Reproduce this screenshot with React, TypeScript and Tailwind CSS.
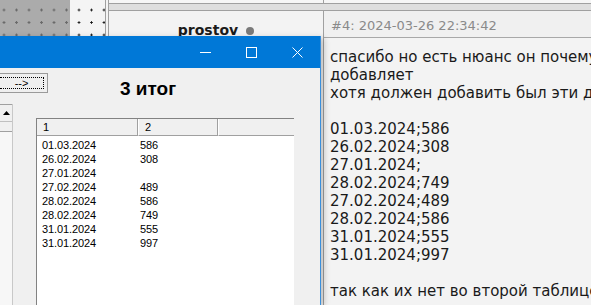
const rows: [string, string][] = [
  ["01.03.2024", "586"],
  ["26.02.2024", "308"],
  ["27.01.2024", ""],
  ["27.02.2024", "489"],
  ["28.02.2024", "586"],
  ["28.02.2024", "749"],
  ["31.01.2024", "555"],
  ["31.01.2024", "997"],
];

const message = [
  "спасибо но есть нюанс он почему то не",
  "добавляет",
  "хотя должен добавить был эти данные",
  "",
  "01.03.2024;586",
  "26.02.2024;308",
  "27.01.2024;",
  "28.02.2024;749",
  "27.02.2024;489",
  "28.02.2024;586",
  "31.01.2024;555",
  "31.01.2024;997",
  "",
  "так как их нет во второй таблице",
];

function TitleButtons() {
  return (
    <div className="flex h-full justify-end">
      <div className="flex w-[46px] items-center justify-center">
        <svg width="11" height="11" viewBox="0 0 11 11">
          <path d="M0 5.5H11" stroke="#fff" strokeWidth="1" />
        </svg>
      </div>
      <div className="flex w-[46px] items-center justify-center">
        <svg width="11" height="11" viewBox="0 0 11 11">
          <rect x="0.5" y="0.5" width="10" height="10" fill="none" stroke="#fff" strokeWidth="1" />
        </svg>
      </div>
      <div className="flex w-[46px] items-center justify-center">
        <svg width="11" height="11" viewBox="0 0 11 11">
          <path d="M0.5 0.5L10.5 10.5M10.5 0.5L0.5 10.5" stroke="#fff" strokeWidth="1" />
        </svg>
      </div>
    </div>
  );
}

function ListView() {
  return (
    <div className="ml-[23px] mt-[14px] h-[187px] w-[258px] border-l border-t border-[#828282] bg-white font-['Liberation_Sans',sans-serif] text-[11px] tracking-[-0.1px] text-black">
      <div className="flex h-[17px] bg-[#f0f0f0]">
        <div className="w-[101px] border-b border-r border-[#a0a0a0] pl-[6px] leading-[16px]">1</div>
        <div className="w-[80px] border-b border-r border-l border-[#a0a0a0] border-l-white pl-[6px] leading-[16px]">2</div>
        <div className="flex-1 border-b border-l border-[#a0a0a0] border-l-white" />
      </div>
      <div className="pt-[2px]">
        {rows.map(([d, v], i) => (
          <div key={i} className="flex h-[14px] leading-[14px]">
            <div className="w-[101px] pl-[5px]">{d}</div>
            <div className="pl-[2px]">{v}</div>
          </div>
        ))}
      </div>
    </div>
  );
}

function DialogWindow() {
  return (
    <div className="absolute left-0 top-[36px] h-[269px] w-[321px] border-r border-[#3a8fdb] bg-[#f0f0f0] shadow-[3px_2px_6px_rgba(0,0,0,0.22)]">
      <div className="h-[32px] bg-[#0078d7]">
        <TitleButtons />
      </div>
      <div className="flex h-[36px] items-start">
        <div className="mt-[5px] flex h-[20px] w-[48px] items-center justify-center border-b border-r border-t border-[#9a9a9a] bg-[#efefef] p-[3px] pl-0">
          <div className="flex h-full w-full items-center justify-center border border-dotted border-l-0 border-black font-['Liberation_Sans',sans-serif] text-[11px] leading-none text-black">
            --&gt;
          </div>
        </div>
        <div className="ml-[72px] mt-[10px] font-['Liberation_Sans',sans-serif] text-[19px] font-bold leading-[22px] text-black">
          3 итог
        </div>
      </div>
      <div className="flex items-start">
        <div className="flex h-[201px] w-[13px] flex-col border-r border-[#c8c8c8]">
          <div className="h-[28px] border-b border-t border-[#a0a0a0] bg-[#f0f0f0]">
            <div className="flex h-[17px] items-center justify-center border-b border-[#c0c0c0]">
              <svg width="7" height="4" viewBox="0 0 7 4">
                <path d="M0 4L3.5 0L7 4Z" fill="#000" />
              </svg>
            </div>
          </div>
          <div className="flex-1 bg-[#f7f7f7]" />
        </div>
        <ListView />
      </div>
    </div>
  );
}

export default function App() {
  return (
    <div className="relative h-[305px] w-[591px] overflow-hidden bg-[#f3f3f3] font-['DejaVu_Sans',sans-serif]">
      <div className="flex h-full">
        <div className="flex h-[36px] w-[108px]">
          <div className="h-full w-[70px] bg-[#ababab] bg-[radial-gradient(circle,#6a6a6a_1px,transparent_1.4px)] bg-[length:12.5px_12.5px] bg-[position:-2.25px_3.75px]" />
          <div className="h-full w-[35px] bg-[#f4f4f4] bg-[radial-gradient(circle,#111_0.9px,transparent_1.3px)] bg-[length:12.5px_12.5px] bg-[position:2.75px_3.75px]" />
          <div className="h-full w-[3px] border-l border-[#a0a0a0] bg-[#f4f4f4]" />
        </div>
        <div className="flex flex-1 flex-col border-l border-[#a0a0a0]">
          <div className="flex h-[4px] border-b border-[#a0a0a0] bg-[#f6f6f6]">
            <div className="w-[215px] border-r border-[#a0a0a0]" />
          </div>
          <div className="h-[7px] border-b border-[#a0a0a0] bg-[#dedede]" />
          <div className="flex flex-1">
            <div className="w-[215px] border-r border-[#a0a0a0]">
              <div className="flex items-center justify-center gap-[8px] pt-[11px]">
                <span className="text-[14px] font-bold leading-[16px] text-[#1a1a1a]">prostov</span>
                <span className="mt-[1px] h-[8px] w-[8px] rounded-full bg-[#7a7a7a]" />
              </div>
            </div>
            <div className="flex flex-1 flex-col">
              <div className="h-[27px] border-b border-[#a8a8a8] bg-[#f0f0f0] pl-[7px] pt-[7px] text-[13px] leading-[16px] text-[#8a8a8a]">
                #4: 2024-03-26 22:34:42
              </div>
              <div className="whitespace-pre pl-[6px] pt-[10px] text-[15px] leading-[18px] text-[#1a1a1a]">
                {message.map((l, i) => (
                  <div key={i} className="h-[18px]">
                    {l}
                  </div>
                ))}
              </div>
            </div>
          </div>
        </div>
      </div>
      <DialogWindow />
    </div>
  );
}
